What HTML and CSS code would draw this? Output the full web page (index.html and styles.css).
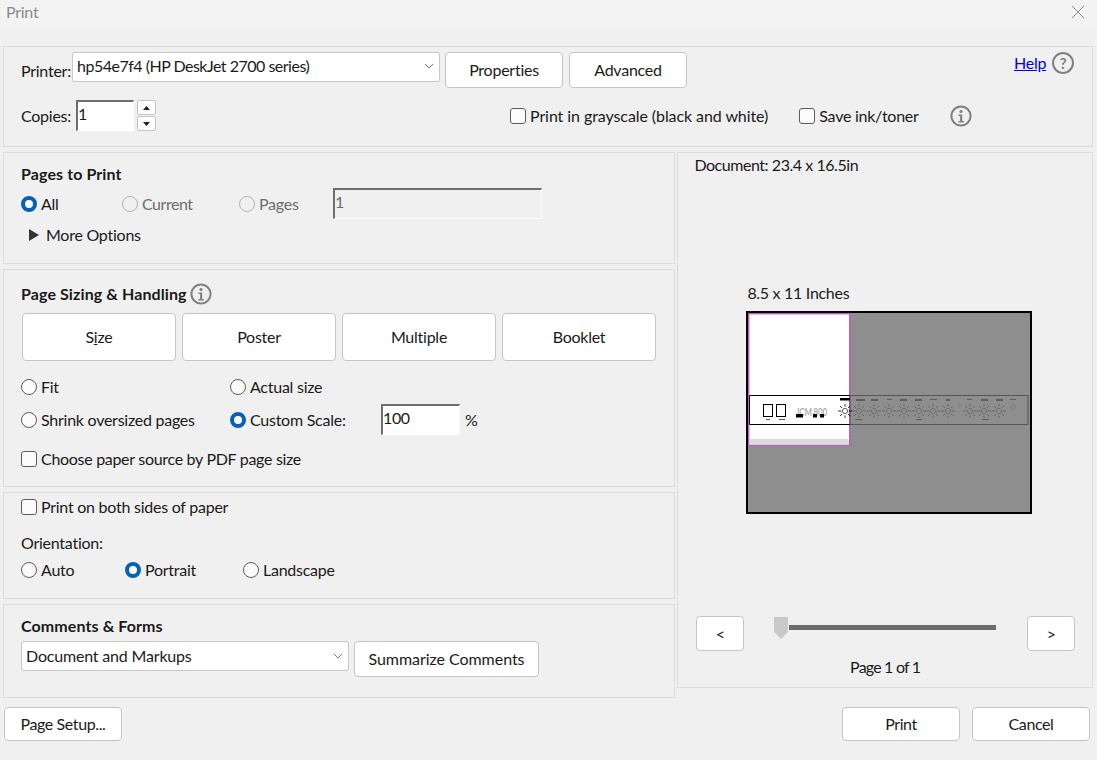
FILE: index.html
```html
<!DOCTYPE html>
<html lang="en">
<head>
    <meta charset="UTF-8">
    <title>Print</title>
    <link rel="stylesheet" href="styles.css">
</head>
<body>

<svg class="defs" width="0" height="0">
    <symbol id="info" viewBox="0 0 22 22">
        <circle cx="11" cy="11" r="9.6" fill="none" stroke="#808080" stroke-width="2"/>
        <circle cx="11" cy="6.5" r="1.6" fill="#808080"/>
        <path d="M8.5 9.5h3.7v6.5h1.6v1.4H8.5V16h1.6v-5H8.5z" fill="#808080"/>
    </symbol>
    <symbol id="chevron" viewBox="0 0 12 7">
        <path d="M1 1l5 5 5-5" fill="none" stroke="#555" stroke-width="1"/>
    </symbol>
    <symbol id="lamp" viewBox="0 0 14 14">
        <circle cx="7" cy="7" r="2.6" fill="none" stroke="currentColor" stroke-width="0.6"/>
        <path d="M0 7h3.5M10.5 7H14M7 0v2.5M7 11.5V14M2 2l2 2M10 10l2 2M12 2l-2 2M4 10l-2 2" stroke="currentColor" stroke-width="0.8"/>
    </symbol>
</svg>

<div class="titlebar">
    <span class="title">Print</span>
    <svg class="close" width="14" height="14" viewBox="0 0 14 14"><path d="M1 1l12 12M13 1L1 13" stroke="#8a8a8a" stroke-width="1"/></svg>
</div>

<div class="dialog">

    <!-- Printer -->
    <div class="panel top-panel">
        <div class="printer-row">
            <label class="field-label">Printer:</label>
            <div class="select printer-select">
                <span>hp54e7f4 (HP DeskJet 2700 series)</span>
                <svg class="chevron"><use href="#chevron"/></svg>
            </div>
            <button class="button top-button">Properties</button>
            <button class="button top-button">Advanced</button>
            <a class="help-link" href="#">Help</a>
            <span class="help-icon">?</span>
        </div>
        <div class="copies-row">
            <label class="field-label">Copies:</label>
            <input class="text-input copies-input" type="text" value="1">
            <div class="spinner">
                <button class="spin-button"><svg width="7" height="4" viewBox="0 0 7 4"><path d="M3.5 0L7 4H0z" fill="#222"/></svg></button>
                <button class="spin-button"><svg width="7" height="4" viewBox="0 0 7 4"><path d="M0 0h7L3.5 4z" fill="#222"/></svg></button>
            </div>
            <label class="option grayscale-option"><input type="checkbox" class="check">Print in grayscale (black and white)</label>
            <label class="option ink-option"><input type="checkbox" class="check">Save ink/toner</label>
            <svg class="info-icon ink-info"><use href="#info"/></svg>
        </div>
    </div>

    <div class="columns">
        <div class="left-column">

            <!-- Pages to print -->
            <section class="panel pages-panel">
                <h2>Pages to Print</h2>
                <div class="pages-row">
                    <label class="option all-option"><input type="radio" class="radio" name="pages" checked>All</label>
                    <label class="option current-option disabled"><input type="radio" class="radio" name="pages" disabled>Current</label>
                    <label class="option pages-option disabled"><input type="radio" class="radio" name="pages" disabled>Pages</label>
                    <input class="text-input range-input" type="text" value="1" disabled>
                </div>
                <div class="more-options"><span class="arrow"></span>More Options</div>
            </section>

            <!-- Page sizing -->
            <section class="panel sizing-panel">
                <div class="heading-row">
                    <h2>Page Sizing &amp; Handling</h2>
                    <svg class="info-icon"><use href="#info"/></svg>
                </div>
                <div class="tabs">
                    <button class="button tab">S<u>i</u>ze</button>
                    <button class="button tab">Poster</button>
                    <button class="button tab">Multiple</button>
                    <button class="button tab">Booklet</button>
                </div>
                <div class="scale-grid">
                    <label class="option"><input type="radio" class="radio" name="scale">Fit</label>
                    <label class="option"><input type="radio" class="radio" name="scale">Actual size</label>
                    <span></span>
                    <label class="option"><input type="radio" class="radio" name="scale">Shrink oversized pages</label>
                    <label class="option"><input type="radio" class="radio" name="scale" checked>Custom Scale:</label>
                    <span class="scale-value"><input class="text-input scale-input" type="text" value="100"> %</span>
                </div>
                <label class="option source-option"><input type="checkbox" class="check">Choose paper source by PDF page size</label>
            </section>

            <!-- Orientation -->
            <section class="panel orientation-panel">
                <label class="option"><input type="checkbox" class="check">Print on both sides of paper</label>
                <div class="orientation-label">Orientation:</div>
                <div class="orientation-row">
                    <label class="option auto-option"><input type="radio" class="radio" name="orient">Auto</label>
                    <label class="option portrait-option"><input type="radio" class="radio" name="orient" checked>Portrait</label>
                    <label class="option"><input type="radio" class="radio" name="orient">Landscape</label>
                </div>
            </section>

            <!-- Comments -->
            <section class="panel comments-panel">
                <h2>Comments &amp; Forms</h2>
                <div class="comments-row">
                    <div class="select comments-select">
                        <span>Document and Markups</span>
                        <svg class="chevron"><use href="#chevron"/></svg>
                    </div>
                    <button class="button summarize">Summarize Comments</button>
                </div>
            </section>
        </div>

        <!-- Preview -->
        <section class="panel preview-panel">
            <div class="doc-size">Document: 23.4 x 16.5in</div>
            <div class="sheet-label">8.5 x 11 Inches</div>
            <svg class="sheet" width="286" height="203" viewBox="0 0 286 203">
                <rect x="1" y="1" width="284" height="201" fill="#8e8e8e" stroke="#000" stroke-width="2"/>
                <rect x="2.7" y="2.7" width="101" height="131.5" fill="#fff" stroke="#bc5cc4" stroke-width="1.4"/>
                <rect x="3.4" y="128" width="99.6" height="5.5" fill="#dcdcdc"/>
                <rect x="104" y="84.5" width="178" height="29" fill="none" stroke="#565656" stroke-width="1"/>
                <path d="M104 84.5H3.5v29H104" fill="none" stroke="#000" stroke-width="1"/>
                <rect x="17.5" y="93.5" width="9" height="12" fill="#fff" stroke="#000"/>
                <rect x="30.5" y="93.5" width="9" height="12" fill="#fff" stroke="#000"/>
                <rect x="20" y="108" width="4" height="1" fill="#555"/>
                <rect x="33" y="108" width="6" height="1" fill="#555"/>
                <text x="50" y="105" class="sheet-text" textLength="31" lengthAdjust="spacingAndGlyphs">JCM 800</text>
                <path d="M50 103h7v3.5h-7zM67 103h4v3.5h-4zM74 103h4v3.5h-4z" fill="#000"/>
                <rect x="94" y="87" width="10" height="2.5" fill="#000"/>
                <use href="#lamp" x="92" y="93" width="14" height="14" color="#000"/>
                <g color="#5e5e5e" fill="#5c5c5c">
                    <rect x="110" y="88" width="9" height="2"/>
                    <rect x="125" y="88" width="7" height="2"/>
                    <rect x="141" y="88" width="5" height="1"/>
                    <rect x="154" y="88" width="7" height="2"/>
                    <rect x="169" y="88" width="7" height="2"/>
                    <rect x="184" y="88" width="7" height="1"/>
                    <rect x="200" y="88" width="4" height="2"/>
                    <rect x="221" y="88" width="5" height="1"/>
                    <rect x="235" y="88" width="7" height="2"/>
                    <rect x="250" y="88" width="7" height="2"/>
                    <rect x="264" y="88" width="6" height="1"/>
                    <rect x="109" y="108" width="7" height="1"/>
                    <rect x="170" y="108" width="6" height="1"/>
                    <rect x="236" y="108" width="7" height="1"/>
                    <use href="#lamp" x="106" y="93" width="14" height="14"/>
                    <use href="#lamp" x="121" y="93" width="14" height="14"/>
                    <use href="#lamp" x="136" y="93" width="14" height="14"/>
                    <use href="#lamp" x="151" y="93" width="14" height="14"/>
                    <use href="#lamp" x="166" y="93" width="14" height="14"/>
                    <use href="#lamp" x="180" y="93" width="14" height="14"/>
                    <use href="#lamp" x="195" y="93" width="14" height="14"/>
                    <use href="#lamp" x="217" y="93" width="14" height="14"/>
                    <use href="#lamp" x="231" y="93" width="14" height="14"/>
                    <use href="#lamp" x="246" y="93" width="14" height="14"/>
                    <circle cx="267" cy="96" r="2.5" fill="none" stroke="#7a7a7a" stroke-width="0.8"/>
                    <circle cx="213" cy="95" r="1.5" fill="none" stroke="#7a7a7a" stroke-width="0.6"/>
                </g>
            </svg>
            <div class="slider-row">
                <button class="button nav-button">&lt;</button>
                <div class="slider">
                    <svg class="thumb" width="15" height="24" viewBox="0 0 15 24"><path d="M0 1h14v15l-7 7-7-7z" fill="#c9c9c9"/></svg>
                    <div class="track"></div>
                </div>
                <button class="button nav-button">&gt;</button>
            </div>
            <div class="page-count">Page 1 of 1</div>
        </section>
    </div>

    <div class="footer">
        <button class="button footer-button">Page Setup...</button>
        <div class="footer-right">
            <button class="button footer-button">Print</button>
            <button class="button footer-button">Cancel</button>
        </div>
    </div>
</div>

</body>
</html>
```

FILE: styles.css
```css
* {
    margin: 0;
    padding: 0;
    box-sizing: border-box;
}
html, body {
    width: 1097px;
    height: 760px;
    overflow: hidden;
}
body {
    font-family: 'Lato', 'Liberation Sans', sans-serif;
    font-size: 16px;
    letter-spacing: -0.25px;
    line-height: 20px;
    color: #1a1a1a;
    background: #f0f0f0;
}
.defs {
    position: absolute;
}
.titlebar {
    height: 30px;
    background: #f3f3f3;
    padding: 0 12px 0 6px;
    display: flex;
    justify-content: space-between;
    align-items: center;
}
.title {
    color: #8a8a8a;
    margin-top: -6px;
}
.close {
    margin-top: -6px;
}
.dialog {
    padding: 16px 4px 0 3px;
}
.panel {
    border: 1px solid #dcdcdc;
}
h2 {
    font-size: 16px;
    font-weight: 700;
    letter-spacing: 0.1px;
    line-height: 20px;
}
.button {
    font: inherit;
    letter-spacing: inherit;
    color: inherit;
    background: #fff;
    border: 1px solid #c4c4c4;
    border-radius: 4px;
    flex: none;
}
.select {
    display: flex;
    justify-content: space-between;
    align-items: center;
    background: #fff;
    border: 1px solid #c8c8c8;
    border-radius: 2px;
    flex: none;
}
.chevron {
    width: 10px;
    height: 6px;
}
.text-input {
    font: inherit;
    letter-spacing: -0.4px;
    color: inherit;
    background: #fff;
    border-style: solid;
    border-width: 2px 1px 1px 2px;
    border-color: #6e6e6e #fff #fff #6e6e6e;
    padding: 0 0 6px 0;
    outline: none;
    flex: none;
}
.option {
    display: inline-flex;
    align-items: center;
    gap: 4px;
    white-space: nowrap;
}
.option.disabled {
    color: #6d6d6d;
}
.check, .radio {
    appearance: none;
    width: 16px;
    height: 16px;
    flex: none;
    background: #fbfbfb;
    border: 1px solid #5c5c5c;
}
.check {
    border-radius: 3px;
}
.radio {
    border-radius: 50%;
}
.radio:checked {
    background: #fff;
    border: 4.5px solid #0561b8;
}
.radio:disabled {
    border-color: #b4b4b4;
    background: #f0f0f0;
}
.info-icon {
    width: 22px;
    height: 22px;
    flex: none;
}

/* Printer */
.top-panel {
    height: 101px;
    padding: 5px 18px 0 17px;
}
.printer-row {
    display: flex;
    align-items: flex-start;
}
.field-label {
    width: 51px;
    flex: none;
}
.printer-row .field-label {
    margin-top: 9px;
}
.printer-select {
    width: 368px;
    height: 30px;
    padding: 0 5px 2px 4px;
    margin-right: 5px;
    letter-spacing: -0.5px;
}
.top-button {
    width: 118px;
    height: 36px;
    margin-right: 6px;
}
.help-link {
    color: #0000ee;
    margin-left: 321px;
    margin-top: 1px;
    flex: none;
}
.help-icon {
    width: 22px;
    height: 22px;
    flex: none;
    margin-left: 6px;
    border: 2px solid #808080;
    border-radius: 50%;
    color: #808080;
    font-weight: 700;
    font-size: 15px;
    line-height: 18px;
    text-align: center;
}
.copies-row {
    display: flex;
    align-items: center;
    margin-top: 12px;
}
.copies-row .field-label {
    width: 55px;
}
.copies-input {
    width: 58px;
    height: 31px;
}
.spinner {
    display: flex;
    flex-direction: column;
    gap: 1px;
    margin-left: 3px;
}
.spin-button {
    display: flex;
    align-items: center;
    justify-content: center;
    width: 19px;
    height: 15px;
    background: #fff;
    border: 1px solid #c4c4c4;
    border-radius: 2px;
}
.grayscale-option {
    margin-left: 354px;
    letter-spacing: -0.08px;
}
.ink-option {
    margin-left: 31px;
    letter-spacing: -0.25px;
}
.ink-info {
    margin-left: 31px;
}

.columns {
    display: flex;
    gap: 2px;
    margin-top: 5px;
}
.left-column {
    width: 673px;
    display: flex;
    flex-direction: column;
    gap: 5px;
}

/* Pages to print */
.pages-panel {
    height: 112px;
    padding: 11px 17px 0;
}
.pages-row {
    display: flex;
    align-items: center;
    height: 31px;
    margin-top: 4px;
}
.all-option {
    width: 101px;
}
.current-option {
    width: 117px;
    letter-spacing: -0.45px;
}
.pages-option {
    width: 94px;
}
.range-input {
    width: 209px;
    height: 31px;
    color: #6d6d6d;
    background: #f0f0f0;
}
.more-options {
    display: flex;
    align-items: center;
    margin: 6px 0 0 8px;
}
.arrow {
    width: 0;
    height: 0;
    border-left: 10px solid #333;
    border-top: 6px solid transparent;
    border-bottom: 6px solid transparent;
    margin-right: 7px;
}

/* Page sizing */
.sizing-panel {
    height: 218px;
    padding: 13px 17px 0;
}
.heading-row {
    display: flex;
    align-items: center;
    gap: 3px;
    height: 22px;
}
.tabs {
    display: flex;
    gap: 6px;
    margin: 8px 0 0 1px;
}
.tab {
    width: 154px;
    height: 48px;
}
.scale-grid {
    display: grid;
    grid-template-columns: 209px 151px auto;
    grid-auto-rows: 33px;
    align-items: center;
    margin-top: 9px;
}
.scale-value {
    display: flex;
    align-items: center;
    gap: 5px;
}
.scale-input {
    width: 79px;
    height: 31px;
}
.source-option {
    margin-top: 13px;
    letter-spacing: -0.3px;
}

/* Orientation */
.orientation-panel {
    height: 107px;
    padding: 4px 17px 0;
}
.orientation-label {
    margin-top: 14px;
}
.orientation-row {
    display: flex;
    margin-top: 7px;
}
.auto-option {
    width: 104px;
}
.portrait-option {
    width: 118px;
}

/* Comments */
.comments-panel {
    height: 94px;
    padding: 11px 17px 0;
}
.comments-row {
    display: flex;
    align-items: flex-start;
    gap: 5px;
    margin-top: 5px;
}
.comments-select {
    width: 328px;
    height: 30px;
    padding: 0 5px 0 4px;
    letter-spacing: -0.18px;
}
.summarize {
    width: 185px;
    height: 36px;
    letter-spacing: -0.05px;
}

/* Preview */
.preview-panel {
    width: 416px;
    height: 536px;
    padding: 2px 0 0 17px;
}
.doc-size {
    height: 20px;
    margin-left: -1px;
    letter-spacing: -0.45px;
}
.sheet-label {
    margin: 108px 0 0 52px;
    letter-spacing: -0.3px;
}
.sheet {
    display: block;
    margin: 8px 0 0 51px;
}
.sheet-text {
    font-size: 12px;
    fill: #b0b0b0;
    font-weight: 700;
}
.slider-row {
    display: flex;
    align-items: flex-start;
    margin: 102px 0 0 1px;
}
.nav-button {
    width: 48px;
    height: 35px;
}
.slider {
    display: flex;
    flex: none;
    width: 283px;
    padding-left: 30px;
}
.thumb {
    flex: none;
}
.track {
    width: 207px;
    height: 5px;
    margin-top: 9px;
    background: #6b6b6b;
}
.page-count {
    text-align: center;
    margin: 6px 0 0 -17px;
    letter-spacing: -0.8px;
}

/* Footer */
.footer {
    display: flex;
    justify-content: space-between;
    margin: 9px 0 0 1px;
    padding-right: 3px;
}
.footer-right {
    display: flex;
    gap: 12px;
}
.footer-button {
    width: 118px;
    height: 34px;
    letter-spacing: -0.4px;
}
```
